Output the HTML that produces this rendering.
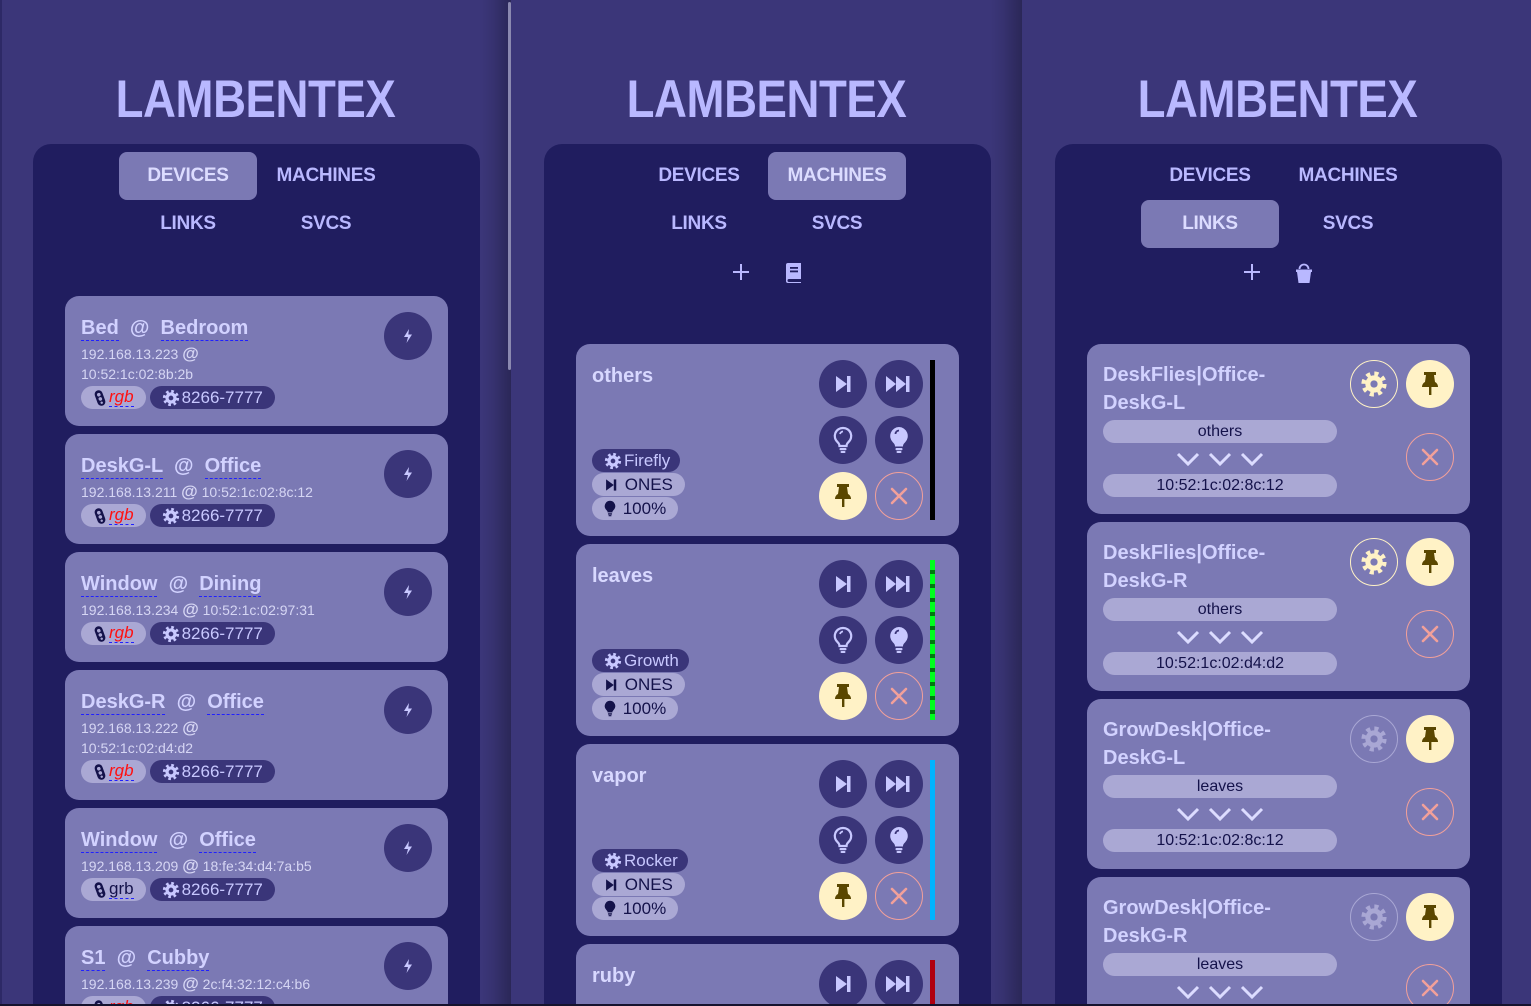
<!DOCTYPE html>
<html><head><meta charset="utf-8">
<style>
*{box-sizing:border-box;margin:0;padding:0}
html{overflow:hidden;width:1531px;height:1006px}
body{width:1531px;height:1006px;overflow:hidden;background:#3b3679;font-family:"Liberation Sans",sans-serif;position:relative}
.col{position:absolute;top:0;width:511px;height:1006px;background:#3b3679;overflow:hidden}
.shadow{position:absolute;top:0;right:0;width:30px;height:1006px;background:linear-gradient(90deg,rgba(0,0,0,0) 0%,rgba(0,0,0,.08) 40%,rgba(0,0,0,.28) 100%)}
.title{position:absolute;top:72px;left:0;width:511px;text-align:center;font-size:53px;font-weight:bold;color:#b9b8ff;transform:scaleX(.86);letter-spacing:-0.5px;line-height:56px}
.panel{position:absolute;left:33px;top:144px;width:447px;height:900px;background:#201d5f;border-radius:18px}
.tab{position:absolute;width:138px;height:48px;line-height:48px;text-align:center;font-size:19px;font-weight:bold;color:#b9b8ff;letter-spacing:-.3px;border-radius:8px}
.tab.on{background:#7b79b4;color:#dcdcff}
.card{position:absolute;left:65px;width:383px;background:#7b79b4;border-radius:14px}
.nm{position:absolute;left:16px;top:21px;font-size:20px;font-weight:bold;color:#d2d2ff;white-space:nowrap}
.nm u{text-decoration:none;border-bottom:1.5px dashed #2020ff;padding-bottom:1px}
.ip{position:absolute;left:16px;top:48px;font-size:14px;color:#d6d6f4;line-height:20px}
.ip b{font-size:17px}
.pills{position:absolute;left:16px;display:flex;gap:4px}
.pill{height:23px;line-height:23px;border-radius:12px;font-size:17px;padding:0 12px;display:flex;align-items:center;gap:2px;white-space:nowrap}
.lt{background:#aaa8d4;color:#14124a}
.dk{background:#3a3579;color:#c8c8ff}
.rgb{color:#ff1010;font-style:italic;border-bottom:1.5px dashed #2020ff;line-height:18px}
.grb{color:#14124a;border-bottom:1.5px dashed #2020ff;line-height:18px}
.circ{position:absolute;width:48px;height:48px;border-radius:50%;display:flex;align-items:center;justify-content:center}
.cd{background:#3a3579}
.cy{background:#fff2c6}
.cx{border:1.5px solid #f2a09a}
.cg{border:1.5px solid #fff2c6}
.cgg{border:1.5px solid #a9a7d4}
.mp{position:absolute;left:16px;display:flex;flex-direction:column;gap:1px}
.mp .pill{align-self:flex-start}
.bar{position:absolute;left:354px;top:16px;width:5px;height:160px}
.lname{position:absolute;left:16px;top:17px;font-size:20px;font-weight:bold;color:#d2d2ff;line-height:28px}
.lp{position:absolute;left:16px;width:234px;height:23px;line-height:23px;border-radius:12px;background:#aaa8d4;color:#14124a;text-align:center;font-size:16px}
.chev{position:absolute;left:88px;width:90px;height:16px}
</style></head><body>

<svg width="0" height="0" style="position:absolute">
<defs>
<symbol id="bolt" viewBox="0 0 16 16"><path d="M9 1 L4 9 H8 L6.5 15 L12 6.5 H8.3 Z" fill="#c8c8ff"/></symbol>
<symbol id="gear" viewBox="0 0 20 20"><circle cx="10" cy="10" r="7" fill="none" stroke="currentColor" stroke-width="4" stroke-dasharray="2.75 2.75"/><circle cx="10" cy="10" r="6.2" fill="currentColor"/><circle cx="10" cy="10" r="2.6" fill="var(--h)"/></symbol>
<symbol id="step" viewBox="0 0 20 20"><path d="M3 2 L14 10 L3 18 Z" fill="currentColor"/><rect x="14" y="2" width="3.5" height="16" fill="currentColor"/></symbol>
<symbol id="ff" viewBox="0 0 28 20"><path d="M1 2 L11 10 L1 18Z M11 2 L21 10 L11 18Z" fill="currentColor"/><rect x="21" y="2" width="3.5" height="16" fill="currentColor"/></symbol>
<symbol id="bulbo" viewBox="0 0 20 28"><path d="M10 2 A8 8 0 0 0 4.5 16 C6 17.5 6.5 19 6.5 20 H13.5 C13.5 19 14 17.5 15.5 16 A8 8 0 0 0 10 2Z" fill="none" stroke="#c8c8ff" stroke-width="2.2"/><path d="M7 8 A3.5 3.5 0 0 1 10 5.5" fill="none" stroke="#c8c8ff" stroke-width="1.8"/><rect x="6.5" y="22" width="7" height="2.2" rx="1" fill="#c8c8ff"/><rect x="7.5" y="25" width="5" height="2" rx="1" fill="#c8c8ff"/></symbol>
<symbol id="bulbf" viewBox="0 0 20 28"><path d="M10 1 A9 9 0 0 0 3.8 16.3 C5.5 18 6 19 6 20.5 H14 C14 19 14.5 18 16.2 16.3 A9 9 0 0 0 10 1Z" fill="#c8c8ff"/><path d="M6.5 8 A3.5 3.5 0 0 1 10 4.5" fill="none" stroke="#3a3579" stroke-width="1.8"/><rect x="6.5" y="22" width="7" height="2.2" rx="1" fill="#c8c8ff"/><rect x="7.5" y="25" width="5" height="2" rx="1" fill="#c8c8ff"/></symbol>
<symbol id="bulbd" viewBox="0 0 20 28"><path d="M10 1 A9 9 0 0 0 3.8 16.3 C5.5 18 6 19 6 20.5 H14 C14 19 14.5 18 16.2 16.3 A9 9 0 0 0 10 1Z" fill="#14124a"/><rect x="6.5" y="22" width="7" height="2.2" rx="1" fill="#14124a"/><rect x="7.5" y="25" width="5" height="2" rx="1" fill="#14124a"/></symbol>
<symbol id="pin" viewBox="0 0 20 28"><path d="M4 2 H16 V5 H14 L15 12 C17 13 18 15 18 17 H2 C2 15 3 13 5 12 L6 5 H4 Z" fill="#5a4700"/><rect x="9" y="17" width="2.4" height="8" fill="#5a4700"/></symbol>
<symbol id="x" viewBox="0 0 20 20"><path d="M3 3 L17 17 M17 3 L3 17" stroke="#f2a09a" stroke-width="2.6" stroke-linecap="round"/></symbol>
<symbol id="chev" viewBox="0 0 90 16"><path d="M3 3 L13 13 L23 3 M35 3 L45 13 L55 3 M67 3 L77 13 L87 3" fill="none" stroke="#dcdcff" stroke-width="3" stroke-linejoin="miter"/></symbol>
<symbol id="tl" viewBox="0 0 14 18"><g transform="rotate(-20 7 9)"><rect x="3" y="1" width="8" height="16" rx="4" fill="#14124a"/><circle cx="7" cy="5.5" r="1.8" fill="#aaa8d4"/><circle cx="7" cy="10" r="1.8" fill="#aaa8d4"/><circle cx="7" cy="14" r="1.2" fill="#aaa8d4"/></g></symbol>
</defs></svg>

<!-- COLUMN 1 -->
<div class="col" style="left:0">
<div style="position:absolute;left:0;top:0;width:2px;height:1006px;background:#2d2966"></div>
<div class="title">LAMBENTEX</div>
<div class="panel"></div>
<div class="tab on" style="left:119px;top:152px">DEVICES</div>
<div class="tab" style="left:257px;top:152px">MACHINES</div>
<div class="tab" style="left:119px;top:200px">LINKS</div>
<div class="tab" style="left:257px;top:200px">SVCS</div>

<div class="card" style="top:296px;height:130px">
 <div class="nm"><u>Bed</u> &nbsp;@&nbsp; <u>Bedroom</u></div>
 <div class="ip">192.168.13.223 <b>@</b><br>10:52:1c:02:8b:2b</div>
 <div class="pills" style="top:90px"><div class="pill lt"><svg width="14" height="18"><use href="#tl"/></svg><span class="rgb">rgb</span></div><div class="pill dk" style="--h:#3a3579"><svg width="18" height="18"><use href="#gear"/></svg>8266-7777</div></div>
 <div class="circ cd" style="left:319px;top:16px"><svg width="16" height="16"><use href="#bolt"/></svg></div>
</div>
<div class="card" style="top:434px;height:110px">
 <div class="nm"><u>DeskG-L</u> &nbsp;@&nbsp; <u>Office</u></div>
 <div class="ip">192.168.13.211 <b>@</b> 10:52:1c:02:8c:12</div>
 <div class="pills" style="top:70px"><div class="pill lt"><svg width="14" height="18"><use href="#tl"/></svg><span class="rgb">rgb</span></div><div class="pill dk" style="--h:#3a3579"><svg width="18" height="18"><use href="#gear"/></svg>8266-7777</div></div>
 <div class="circ cd" style="left:319px;top:16px"><svg width="16" height="16"><use href="#bolt"/></svg></div>
</div>
<div class="card" style="top:552px;height:110px">
 <div class="nm"><u>Window</u> &nbsp;@&nbsp; <u>Dining</u></div>
 <div class="ip">192.168.13.234 <b>@</b> 10:52:1c:02:97:31</div>
 <div class="pills" style="top:70px"><div class="pill lt"><svg width="14" height="18"><use href="#tl"/></svg><span class="rgb">rgb</span></div><div class="pill dk" style="--h:#3a3579"><svg width="18" height="18"><use href="#gear"/></svg>8266-7777</div></div>
 <div class="circ cd" style="left:319px;top:16px"><svg width="16" height="16"><use href="#bolt"/></svg></div>
</div>
<div class="card" style="top:670px;height:130px">
 <div class="nm"><u>DeskG-R</u> &nbsp;@&nbsp; <u>Office</u></div>
 <div class="ip">192.168.13.222 <b>@</b><br>10:52:1c:02:d4:d2</div>
 <div class="pills" style="top:90px"><div class="pill lt"><svg width="14" height="18"><use href="#tl"/></svg><span class="rgb">rgb</span></div><div class="pill dk" style="--h:#3a3579"><svg width="18" height="18"><use href="#gear"/></svg>8266-7777</div></div>
 <div class="circ cd" style="left:319px;top:16px"><svg width="16" height="16"><use href="#bolt"/></svg></div>
</div>
<div class="card" style="top:808px;height:110px">
 <div class="nm"><u>Window</u> &nbsp;@&nbsp; <u>Office</u></div>
 <div class="ip">192.168.13.209 <b>@</b> 18:fe:34:d4:7a:b5</div>
 <div class="pills" style="top:70px"><div class="pill lt"><svg width="14" height="18"><use href="#tl"/></svg><span class="grb">grb</span></div><div class="pill dk" style="--h:#3a3579"><svg width="18" height="18"><use href="#gear"/></svg>8266-7777</div></div>
 <div class="circ cd" style="left:319px;top:16px"><svg width="16" height="16"><use href="#bolt"/></svg></div>
</div>
<div class="card" style="top:926px;height:80px;border-radius:14px 14px 0 0">
 <div class="nm"><u>S1</u> &nbsp;@&nbsp; <u>Cubby</u></div>
 <div class="ip">192.168.13.239 <b>@</b> 2c:f4:32:12:c4:b6</div>
 <div class="pills" style="top:70px"><div class="pill lt"><svg width="14" height="18"><use href="#tl"/></svg><span class="rgb">rgb</span></div><div class="pill dk" style="--h:#3a3579"><svg width="18" height="18"><use href="#gear"/></svg>8266-7777</div></div>
 <div class="circ cd" style="left:319px;top:16px"><svg width="16" height="16"><use href="#bolt"/></svg></div>
</div>
<div class="shadow"></div>
<div style="position:absolute;left:508px;top:2px;width:3px;height:368px;background:#8b89b0;border-radius:2px"></div>
</div>

<!-- COLUMN 2 -->
<div class="col" style="left:511px">
<div class="title">LAMBENTEX</div>
<div class="panel"></div>
<div class="tab" style="left:119px;top:152px">DEVICES</div>
<div class="tab on" style="left:257px;top:152px">MACHINES</div>
<div class="tab" style="left:119px;top:200px">LINKS</div>
<div class="tab" style="left:257px;top:200px">SVCS</div>
<svg style="position:absolute;left:221px;top:263px" width="18" height="18"><path d="M9 1 V17 M1 9 H17" stroke="#b9b8ff" stroke-width="2"/></svg>
<svg style="position:absolute;left:274px;top:262px" width="18" height="22" viewBox="0 0 18 22"><path d="M3 1 H16 V17 H4 A1.5 1.5 0 0 0 4 20 H16 V21 H3 A2 2 0 0 1 1 19 V3 A2 2 0 0 1 3 1Z" fill="#b9b8ff"/><rect x="5" y="5" width="8" height="1.8" fill="#201d5f"/><rect x="5" y="8.5" width="8" height="1.8" fill="#201d5f"/></svg>

<div class="card" style="top:344px;height:192px">
 <div class="nm" style="top:21px;color:#d8d8ff">others</div>
 <div class="mp" style="top:105px"><div class="pill dk" style="--h:#3a3579;padding:0 10px 0 12px"><svg width="18" height="18"><use href="#gear"/></svg>Firefly</div><div class="pill lt"><svg width="14" height="14"><use href="#step" style="color:#14124a"/></svg>&nbsp;ONES</div><div class="pill lt"><svg width="12" height="17"><use href="#bulbd"/></svg>&nbsp;100%</div></div>
 <div class="circ cd" style="left:243px;top:16px;color:#c8c8ff"><svg width="20" height="20"><use href="#step"/></svg></div>
 <div class="circ cd" style="left:299px;top:16px;color:#c8c8ff"><svg width="28" height="20"><use href="#ff"/></svg></div>
 <div class="circ cd" style="left:243px;top:72px"><svg width="20" height="28"><use href="#bulbo"/></svg></div>
 <div class="circ cd" style="left:299px;top:72px"><svg width="20" height="28"><use href="#bulbf"/></svg></div>
 <div class="circ cy" style="left:243px;top:128px"><svg width="20" height="28"><use href="#pin"/></svg></div>
 <div class="circ cx" style="left:299px;top:128px"><svg width="20" height="20"><use href="#x"/></svg></div>
 <div class="bar" style="background:#000"></div>
</div>
<div class="card" style="top:544px;height:192px">
 <div class="nm" style="top:21px;color:#d8d8ff">leaves</div>
 <div class="mp" style="top:105px"><div class="pill dk" style="--h:#3a3579;padding:0 10px 0 12px"><svg width="18" height="18"><use href="#gear"/></svg>Growth</div><div class="pill lt"><svg width="14" height="14"><use href="#step" style="color:#14124a"/></svg>&nbsp;ONES</div><div class="pill lt"><svg width="12" height="17"><use href="#bulbd"/></svg>&nbsp;100%</div></div>
 <div class="circ cd" style="left:243px;top:16px;color:#c8c8ff"><svg width="20" height="20"><use href="#step"/></svg></div>
 <div class="circ cd" style="left:299px;top:16px;color:#c8c8ff"><svg width="28" height="20"><use href="#ff"/></svg></div>
 <div class="circ cd" style="left:243px;top:72px"><svg width="20" height="28"><use href="#bulbo"/></svg></div>
 <div class="circ cd" style="left:299px;top:72px"><svg width="20" height="28"><use href="#bulbf"/></svg></div>
 <div class="circ cy" style="left:243px;top:128px"><svg width="20" height="28"><use href="#pin"/></svg></div>
 <div class="circ cx" style="left:299px;top:128px"><svg width="20" height="20"><use href="#x"/></svg></div>
 <div class="bar" style="background:repeating-linear-gradient(180deg,#00ff20 0 10px,#007a10 10px 14px)"></div>
</div>
<div class="card" style="top:744px;height:192px">
 <div class="nm" style="top:21px;color:#d8d8ff">vapor</div>
 <div class="mp" style="top:105px"><div class="pill dk" style="--h:#3a3579;padding:0 10px 0 12px"><svg width="18" height="18"><use href="#gear"/></svg>Rocker</div><div class="pill lt"><svg width="14" height="14"><use href="#step" style="color:#14124a"/></svg>&nbsp;ONES</div><div class="pill lt"><svg width="12" height="17"><use href="#bulbd"/></svg>&nbsp;100%</div></div>
 <div class="circ cd" style="left:243px;top:16px;color:#c8c8ff"><svg width="20" height="20"><use href="#step"/></svg></div>
 <div class="circ cd" style="left:299px;top:16px;color:#c8c8ff"><svg width="28" height="20"><use href="#ff"/></svg></div>
 <div class="circ cd" style="left:243px;top:72px"><svg width="20" height="28"><use href="#bulbo"/></svg></div>
 <div class="circ cd" style="left:299px;top:72px"><svg width="20" height="28"><use href="#bulbf"/></svg></div>
 <div class="circ cy" style="left:243px;top:128px"><svg width="20" height="28"><use href="#pin"/></svg></div>
 <div class="circ cx" style="left:299px;top:128px"><svg width="20" height="20"><use href="#x"/></svg></div>
 <div class="bar" style="background:#00b4ff"></div>
</div>
<div class="card" style="top:944px;height:62px;border-radius:14px 14px 0 0">
 <div class="nm" style="top:21px;color:#d8d8ff">ruby</div>
 <div class="circ cd" style="left:243px;top:16px;color:#c8c8ff"><svg width="20" height="20"><use href="#step"/></svg></div>
 <div class="circ cd" style="left:299px;top:16px;color:#c8c8ff"><svg width="28" height="20"><use href="#ff"/></svg></div>
 <div class="bar" style="background:#b00010"></div>
</div>
<div class="shadow" style="width:32px"></div>
</div>

<!-- COLUMN 3 -->
<div class="col" style="left:1022px;width:509px">
<div class="title">LAMBENTEX</div>
<div class="panel"></div>
<div class="tab" style="left:119px;top:152px">DEVICES</div>
<div class="tab" style="left:257px;top:152px">MACHINES</div>
<div class="tab on" style="left:119px;top:200px">LINKS</div>
<div class="tab" style="left:257px;top:200px">SVCS</div>
<svg style="position:absolute;left:221px;top:263px" width="18" height="18"><path d="M9 1 V17 M1 9 H17" stroke="#b9b8ff" stroke-width="2"/></svg>
<svg style="position:absolute;left:273px;top:262px" width="18" height="22" viewBox="0 0 18 22"><path d="M4.5 7 A4.5 4.5 0 0 1 13.5 7" fill="none" stroke="#b9b8ff" stroke-width="1.8"/><path d="M1 7.5 H17 V10 H16 L14.5 21 H3.5 L2 10 H1Z" fill="#b9b8ff"/></svg>

<div class="card" style="top:344px;height:170px">
 <div class="lname">DeskFlies|Office-<br>DeskG-L</div>
 <div class="lp" style="top:76px">others</div>
 <svg class="chev" style="top:107px"><use href="#chev"/></svg>
 <div class="lp" style="top:130px">10:52:1c:02:8c:12</div>
 <div class="circ cg" style="left:263px;top:16px;color:#fff2c6;--h:#7b79b4"><svg width="28" height="28"><use href="#gear"/></svg></div>
 <div class="circ cy" style="left:319px;top:16px"><svg width="20" height="28"><use href="#pin"/></svg></div>
 <div class="circ cx" style="left:319px;top:89px"><svg width="20" height="20"><use href="#x"/></svg></div>
</div>
<div class="card" style="top:522px;height:169px">
 <div class="lname">DeskFlies|Office-<br>DeskG-R</div>
 <div class="lp" style="top:76px">others</div>
 <svg class="chev" style="top:107px"><use href="#chev"/></svg>
 <div class="lp" style="top:130px">10:52:1c:02:d4:d2</div>
 <div class="circ cg" style="left:263px;top:16px;color:#fff2c6;--h:#7b79b4"><svg width="28" height="28"><use href="#gear"/></svg></div>
 <div class="circ cy" style="left:319px;top:16px"><svg width="20" height="28"><use href="#pin"/></svg></div>
 <div class="circ cx" style="left:319px;top:88px"><svg width="20" height="20"><use href="#x"/></svg></div>
</div>
<div class="card" style="top:699px;height:170px">
 <div class="lname">GrowDesk|Office-<br>DeskG-L</div>
 <div class="lp" style="top:76px">leaves</div>
 <svg class="chev" style="top:107px"><use href="#chev"/></svg>
 <div class="lp" style="top:130px">10:52:1c:02:8c:12</div>
 <div class="circ cgg" style="left:263px;top:16px;color:#a9a7d4;--h:#7b79b4"><svg width="28" height="28"><use href="#gear"/></svg></div>
 <div class="circ cy" style="left:319px;top:16px"><svg width="20" height="28"><use href="#pin"/></svg></div>
 <div class="circ cx" style="left:319px;top:89px"><svg width="20" height="20"><use href="#x"/></svg></div>
</div>
<div class="card" style="top:877px;height:129px;border-radius:14px 14px 0 0">
 <div class="lname">GrowDesk|Office-<br>DeskG-R</div>
 <div class="lp" style="top:76px">leaves</div>
 <svg class="chev" style="top:107px"><use href="#chev"/></svg>
 <div class="circ cgg" style="left:263px;top:16px;color:#a9a7d4;--h:#7b79b4"><svg width="28" height="28"><use href="#gear"/></svg></div>
 <div class="circ cy" style="left:319px;top:16px"><svg width="20" height="28"><use href="#pin"/></svg></div>
 <div class="circ cx" style="left:319px;top:87px"><svg width="20" height="20"><use href="#x"/></svg></div>
</div>
</div>
<div style="position:absolute;left:0;top:1004px;width:1531px;height:2px;background:#15132e"></div>
</body></html>
